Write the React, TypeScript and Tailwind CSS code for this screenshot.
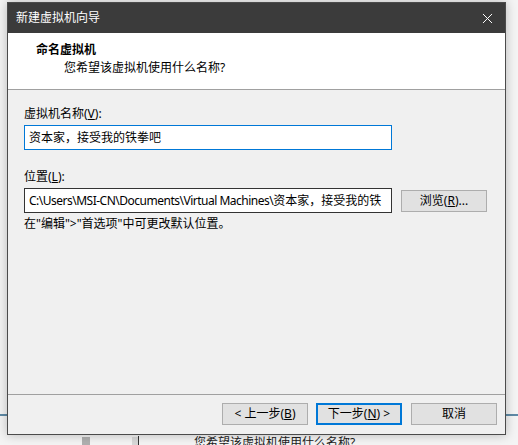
import { X } from 'lucide-react';

const font = { fontFamily: '"Noto Sans", "Noto Sans CJK SC", sans-serif' };

function Btn({ label, accel, pre, post, primary }: { label: string; accel?: string; pre?: string; post?: string; primary?: boolean }) {
  return (
    <button
      className={`flex h-[22px] w-[86px] shrink-0 items-center justify-center bg-[#e1e1e1] text-[12px] leading-none text-black ${
        primary ? 'border-2 border-[#0078d7]' : 'border border-[#adadad]'
      }`}
    >
      {pre}
      {label}
      {accel && (
        <>
          (<span className="underline">{accel}</span>)
        </>
      )}
      {post}
    </button>
  );
}

export default function App() {
  return (
    <div className="relative h-[445px] w-[518px] overflow-hidden bg-[#f4f4f4]" style={font}>
      {/* stuff peeking out behind the dialog */}
      <div className="absolute left-0 top-[414px] h-[2px] w-[10px] bg-[#5f8aa6]" />
      <div className="absolute right-0 top-[414px] h-[2px] w-[14px] bg-[#5f8aa6]" />
      <div className="absolute left-[82px] top-[437px] h-[8px] w-[8px] bg-[#b0b0b0]" />
      <div className="absolute left-[132px] top-[437px] h-[8px] w-[6px] bg-[#d8d8d8]" />
      <div className="absolute left-[138px] top-[436px] h-[9px] w-px bg-[#333]" />
      <div className="absolute left-[194px] top-[434px] text-[12px] text-[#222]">您希望该虚拟机使用什么名称?</div>

      <div className="relative ml-[7px] mt-[2px] flex h-[433px] w-[499px] flex-col border border-[#4b4b4b] bg-[#f0f0f0] shadow-[0_0_10px_rgba(0,0,0,0.25)]">
        <div className="flex h-[30px] shrink-0 items-center justify-between bg-[#3b3b3b] pl-[8px] pr-[9px] text-[12px] text-white">
          <span>新建虚拟机向导</span>
          <X size={17} strokeWidth={1.4} />
        </div>

        <div className="flex h-[57px] shrink-0 flex-col border-b border-[#a0a0a0] bg-white pl-[28px] pt-[8px] text-[12px] leading-[18px] text-black">
          <span className="font-bold">命名虚拟机</span>
          <span className="pl-[28px]">您希望该虚拟机使用什么名称?</span>
        </div>

        <div className="flex flex-1 flex-col px-[16px] pt-[15px] text-[12px] text-black">
          <label className="leading-[18px]">
            虚拟机名称(<span className="underline">V</span>):
          </label>
          <div className="mt-[2px] flex h-[25px] w-[368px] items-center border border-[#0078d7] bg-white pl-[4px]">
            资本家，接受我的铁拳吧
          </div>

          <label className="mt-[18px] leading-[18px]">
            位置(<span className="underline">L</span>):
          </label>
          <div className="mt-[2px] flex items-center gap-[9px]">
            <div className="h-[25px] w-[368px] shrink-0 overflow-hidden border border-[#333] bg-white">
              <div className="flex h-full w-[362px] items-center overflow-hidden whitespace-nowrap pl-[4px]">
                <span className="tracking-[-0.5px]">C:\Users\MSI-CN\Documents\Virtual Machines\</span>
                <span>资本家，接受我的铁</span>
              </div>
            </div>
            <Btn label="浏览" accel="R" post="..." />
          </div>
          <p className="mt-[2px] leading-[18px]">在"编辑"&gt;"首选项"中可更改默认位置。</p>
        </div>

        <div className="flex h-[40px] shrink-0 items-start justify-end gap-[8px] border-t border-[#a0a0a0] pr-[8px] pt-[8px]">
          <Btn label="上一步" accel="B" pre="< " />
          <Btn label="下一步" accel="N" post=" >" primary />
          <div className="ml-[1px]">
            <Btn label="取消" />
          </div>
        </div>
      </div>
    </div>
  );
}
